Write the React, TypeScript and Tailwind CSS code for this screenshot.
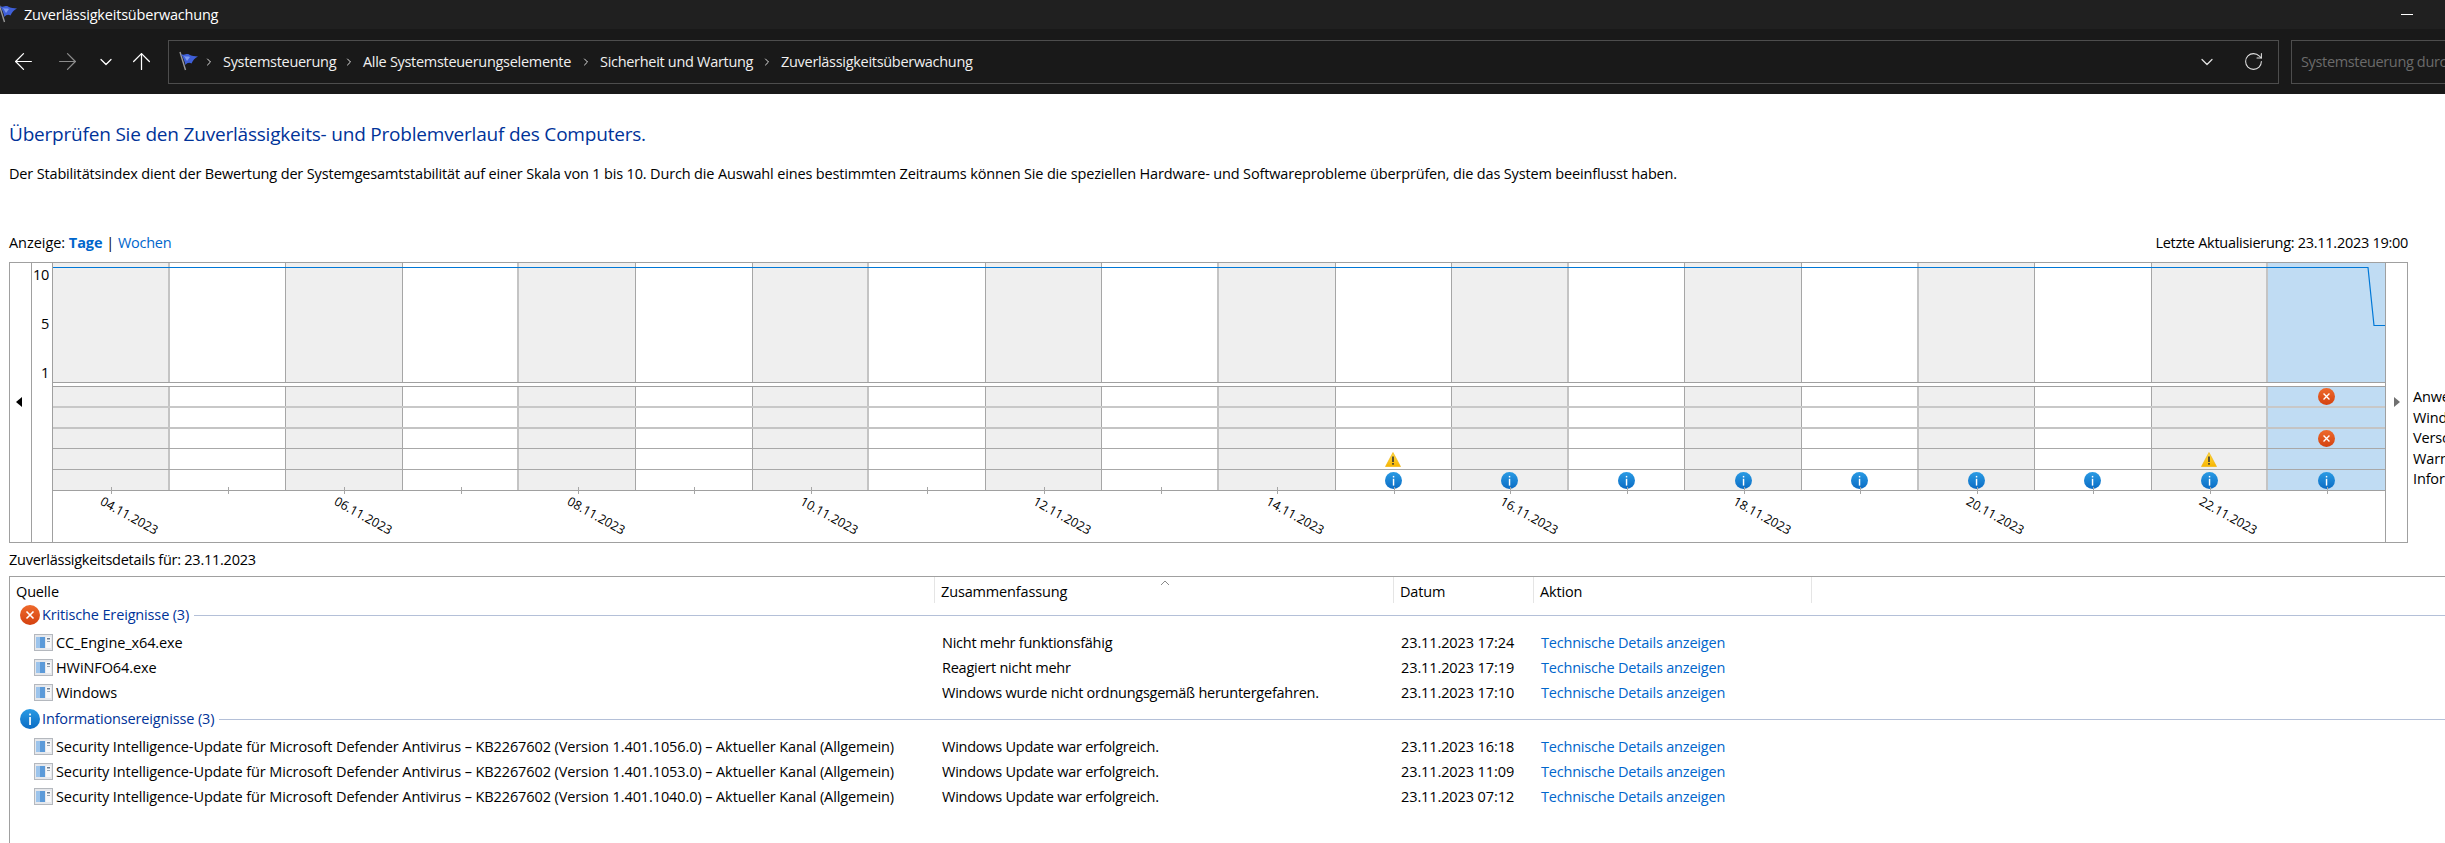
import React from "react";
import { ArrowLeft, ArrowRight, ArrowUp, ChevronDown, ChevronRight, RotateCw } from "lucide-react";

const Flag = () => (
  <svg width="22" height="22" viewBox="0 0 22 22" className="shrink-0">
    <path d="M2 1 L7.5 19" stroke="#9a9a9a" strokeWidth="1.4" />
    <path d="M3 3 C6 5 9 2 11 3.5 C13.5 5 17 5 20 5.5 C17 7 15 9 13.5 12.5 C11 11 9 12 7.5 14 C6.5 10 5 6 3 3 Z" fill="#3f5fd8" />
    <path d="M6 5 C8 6 10 5 12 6 L9 10 Z" fill="#7f9cf0" />
  </svg>
);

const ErrorIcon = ({ size = 17 }: { size?: number }) => (
  <svg width={size} height={size} viewBox="0 0 20 20" className="shrink-0">
    <defs>
      <linearGradient id="err" x1="0" y1="0" x2="0" y2="1">
        <stop offset="0" stopColor="#ee6a2c" />
        <stop offset="1" stopColor="#d4410f" />
      </linearGradient>
    </defs>
    <circle cx="10" cy="10" r="10" fill="url(#err)" />
    <path d="M6.5 6.5 L13.5 13.5 M13.5 6.5 L6.5 13.5" stroke="#fff" strokeWidth="1.6" />
  </svg>
);

const InfoIcon = ({ size = 17 }: { size?: number }) => (
  <svg width={size} height={size} viewBox="0 0 20 20" className="shrink-0">
    <defs>
      <linearGradient id="inf" x1="0" y1="0" x2="0" y2="1">
        <stop offset="0" stopColor="#2a9be4" />
        <stop offset="1" stopColor="#0b6cc4" />
      </linearGradient>
    </defs>
    <circle cx="10" cy="10" r="10" fill="url(#inf)" />
    <rect x="9.2" y="8" width="1.7" height="8" fill="#fff" />
    <rect x="9.2" y="4.6" width="1.7" height="1.8" fill="#fff" />
  </svg>
);

const WarnIcon = () => (
  <svg width="16" height="15" viewBox="0 0 16 15" className="shrink-0">
    <defs>
      <linearGradient id="wrn" x1="0" y1="0" x2="0" y2="1">
        <stop offset="0" stopColor="#ffdc4a" />
        <stop offset="1" stopColor="#f7b500" />
      </linearGradient>
    </defs>
    <path d="M8 0.5 L15.5 14.5 L0.5 14.5 Z" fill="url(#wrn)" stroke="#f0b000" strokeWidth="0.6" strokeLinejoin="round" />
    <rect x="7.2" y="4.5" width="1.6" height="5.5" fill="#333" />
    <rect x="7.2" y="11" width="1.6" height="1.7" fill="#333" />
  </svg>
);

const AppIcon = () => (
  <svg width="19" height="17" viewBox="0 0 19 17" className="shrink-0">
    <rect x="0.5" y="0.5" width="18" height="16" fill="#e6e8ec" stroke="#b4b8be" />
    <rect x="2" y="3" width="9" height="11" fill="#5b9ad9" />
    <rect x="2" y="3" width="4" height="11" fill="#9cc4ec" />
    <rect x="12" y="3" width="5" height="11" fill="#f7f8fa" />
    <rect x="13" y="4" width="3" height="1.5" fill="#6d7b8c" />
    <rect x="13" y="7" width="3" height="1" fill="#9aa5b1" />
  </svg>
);

const dates = ["04.11.2023", "", "06.11.2023", "", "08.11.2023", "", "10.11.2023", "", "12.11.2023", "", "14.11.2023", "", "16.11.2023", "", "18.11.2023", "", "20.11.2023", "", "22.11.2023", ""];

const days = Array.from({ length: 20 }, (_, i) => i);

const cellBg = (i: number) => (i === 19 ? "bg-[#c0dcf3]" : i % 2 === 0 ? "bg-[#efefef]" : "bg-white");
const cellLine = (i: number) =>
  i === 19 ? "" : i % 3 === 0 ? "border-r-2 border-[#c4c4c4]" : "border-r border-[#a6a6a6]";

const trackRows = [
  { h: "h-[21px]", line: "border-b-2 border-[#c8c8c8]", err: [19], warn: [] as number[], info: [] as number[] },
  { h: "h-[21px]", line: "border-b-2 border-[#c4c4c4]", err: [], warn: [], info: [] },
  { h: "h-[20px]", line: "border-b border-[#a8a8a8]", err: [19], warn: [], info: [] },
  { h: "h-[21px]", line: "border-b border-[#a8a8a8]", err: [], warn: [11, 18], info: [] },
  { h: "h-[21px]", line: "border-b border-[#a0a0a0]", err: [], warn: [], info: [11, 12, 13, 14, 15, 16, 17, 18, 19] },
];

const labels = ["Anwendungsfehler", "Windows-Fehler", "Verschiedene Fehler", "Warnungen", "Informationen"];

const critical = [
  { src: "CC_Engine_x64.exe", sum: "Nicht mehr funktionsfähig", date: "23.11.2023 17:24" },
  { src: "HWiNFO64.exe", sum: "Reagiert nicht mehr", date: "23.11.2023 17:19" },
  { src: "Windows", sum: "Windows wurde nicht ordnungsgemäß heruntergefahren.", date: "23.11.2023 17:10" },
];
const infos = [
  { src: "Security Intelligence-Update für Microsoft Defender Antivirus – KB2267602 (Version 1.401.1056.0) – Aktueller Kanal (Allgemein)", sum: "Windows Update war erfolgreich.", date: "23.11.2023 16:18" },
  { src: "Security Intelligence-Update für Microsoft Defender Antivirus – KB2267602 (Version 1.401.1053.0) – Aktueller Kanal (Allgemein)", sum: "Windows Update war erfolgreich.", date: "23.11.2023 11:09" },
  { src: "Security Intelligence-Update für Microsoft Defender Antivirus – KB2267602 (Version 1.401.1040.0) – Aktueller Kanal (Allgemein)", sum: "Windows Update war erfolgreich.", date: "23.11.2023 07:12" },
];

const Crumb = ({ text, w }: { text: string; w: string }) => (
  <div className="flex items-center">
    <ChevronRight size={12} strokeWidth={2} className="text-[#e0e0e0] shrink-0" />
    <span className={`${w} ml-[8px] mr-[7px] whitespace-nowrap text-[14.5px] tracking-[-0.3px] text-[#f0f0f0]`}>{text}</span>
  </div>
);

const GroupHead = ({ icon, text }: { icon: React.ReactNode; text: string }) => (
  <div className="flex items-center h-[24px] pl-[10px]">
    {icon}
    <span className="ml-[2px] text-[14.5px] tracking-[-0.15px] text-[#003399] whitespace-nowrap">{text}</span>
    <div className="flex-1 h-px bg-[#b4c0d8] ml-[5px]" />
  </div>
);

const EventRow = ({ src, sum, date }: { src: string; sum: string; date: string }) => (
  <div className="grid grid-cols-[925px_459px_140px_278px] h-[25px] items-center text-[14.5px] tracking-[-0.1px] text-black">
    <div className="flex items-center pl-[24px] whitespace-nowrap">
      <AppIcon />
      <span className="ml-[3px]">{src}</span>
    </div>
    <div className="pl-[7px] whitespace-nowrap tracking-[-0.25px]">{sum}</div>
    <div className="pl-[7px] whitespace-nowrap">{date}</div>
    <div className="pl-[7px] whitespace-nowrap tracking-[-0.2px] text-[#0066cc]">Technische Details anzeigen</div>
  </div>
);

export default function App() {
  return (
    <div className="w-screen h-screen overflow-hidden flex flex-col bg-white font-['Open_Sans',sans-serif]">
      {/* Titelleiste */}
      <div className="h-[29px] shrink-0 bg-[#202020] flex items-center text-white">
        <div className="-ml-[3px] -mt-[1px]">
          <Flag />
        </div>
        <span className="ml-[5px] text-[14.5px] tracking-[-0.2px]">Zuverlässigkeitsüberwachung</span>
        <div className="ml-auto mr-[32px] w-[12px] h-px bg-white" />
      </div>

      {/* Navigationsleiste */}
      <div className="h-[65px] shrink-0 bg-[#191919] flex items-center">
        <div className="w-[168px] shrink-0 flex items-center">
          <ArrowLeft size={27} strokeWidth={1.1} className="ml-[10px] text-white" />
          <ArrowRight size={27} strokeWidth={1.1} className="ml-[17px] text-[#8c8c8c]" />
          <ChevronDown size={20} strokeWidth={1.5} className="ml-[15px] text-white" />
          <ArrowUp size={27} strokeWidth={1.1} className="ml-[12px] text-white" />
        </div>
        <div className="w-[2111px] shrink-0 h-[44px] border border-[#4d4d4d] flex items-center">
          <div className="ml-[9px] mr-[3px]">
            <Flag />
          </div>
          <Crumb text="Systemsteuerung" w="w-[113px]" />
          <Crumb text="Alle Systemsteuerungselemente" w="w-[210px]" />
          <Crumb text="Sicherheit und Wartung" w="w-[154px]" />
          <Crumb text="Zuverlässigkeitsüberwachung" w="w-[193px]" />
          <ChevronDown size={20} strokeWidth={1.5} className="ml-auto mr-[26px] text-[#e0e0e0]" />
          <RotateCw size={21} strokeWidth={1.2} className="mr-[14px] text-[#e0e0e0]" />
        </div>
        <div className="ml-[12px] w-[300px] shrink-0 h-[44px] border border-[#4d4d4d] flex items-center pl-[9px]">
          <span className="text-[14.5px] tracking-[-0.35px] text-[#6b6b6b] whitespace-nowrap">Systemsteuerung durchsuchen</span>
        </div>
      </div>

      {/* Inhalt */}
      <div className="flex-1 min-h-0 flex flex-col">
        <h1 className="mt-[27px] ml-[9px] h-[26px] leading-[26px] text-[19px] font-normal tracking-[-0.2px] text-[#003399] whitespace-nowrap">
          Überprüfen Sie den Zuverlässigkeits- und Problemverlauf des Computers.
        </h1>
        <p className="mt-[16px] ml-[9px] h-[22px] leading-[22px] text-[14.5px] tracking-[-0.16px] text-black whitespace-nowrap">
          Der Stabilitätsindex dient der Bewertung der Systemgesamtstabilität auf einer Skala von 1 bis 10. Durch die Auswahl eines bestimmten Zeitraums können Sie die speziellen Hardware- und Softwareprobleme überprüfen, die das System beeinflusst haben.
        </p>

        <div className="mt-[47px] ml-[9px] w-[2399px] h-[22px] flex items-center justify-between text-[14.5px] tracking-[-0.15px] text-black">
          <div className="tracking-[-0.05px]">
            Anzeige: <span className="font-bold text-[#0066cc]">Tage</span> | <span className="tracking-[-0.25px] text-[#0066cc]">Wochen</span>
          </div>
          <div className="tracking-[-0.28px]">Letzte Aktualisierung: 23.11.2023 19:00</div>
        </div>

        {/* Stabilitätsdiagramm */}
        <div className="mt-[8px] flex shrink-0">
          <div className="ml-[9px] w-[2399px] shrink-0 h-[281px] border border-[#a0a0a0] flex">
            <div className="w-[22px] shrink-0 border-r border-[#a0a0a0] pt-[134px] pl-[6px]">
              <div className="w-0 h-0 border-y-[5px] border-y-transparent border-r-[6px] border-r-black" />
            </div>
            <div className="w-[21px] shrink-0 border-r border-[#a0a0a0] text-right pr-[3px] text-[14.5px] leading-[20px] tracking-[-0.3px] text-black">
              <div className="mt-[2px] h-[49px]">10</div>
              <div className="h-[49px]">5</div>
              <div>1</div>
            </div>

            <div className="flex-1 min-w-0 flex flex-col relative">
              <div className="grid grid-cols-[repeat(20,1fr)] h-[120px] border-b border-[#a0a0a0]">
                {days.map((i) => (
                  <div key={i} className={`${cellBg(i)} ${cellLine(i)}`} />
                ))}
              </div>
              <svg className="absolute left-0 top-0" width="2332" height="70">
                <path d="M0 4.5 H2315 L2321 62.5 H2332" fill="none" stroke="#0078d7" strokeWidth="1.2" />
              </svg>
              <div className="h-[4px] border-b border-[#a0a0a0]" />
              {trackRows.map((row, r) => (
                <div key={r} className={`grid grid-cols-[repeat(20,1fr)] ${row.h} ${row.line}`}>
                  {days.map((i) => (
                    <div key={i} className={`flex items-center justify-center ${cellBg(i)} ${cellLine(i)}`}>
                      {row.err.includes(i) && <ErrorIcon />}
                      {row.warn.includes(i) && <WarnIcon />}
                      {row.info.includes(i) && <InfoIcon />}
                    </div>
                  ))}
                </div>
              ))}
              <div className="grid grid-cols-[repeat(20,1fr)] flex-1">
                {days.map((i) => (
                  <div key={i} className="relative flex items-center justify-center">
                    <div className="absolute -top-[4px] left-1/2 w-px h-[7px] bg-[#a6a6a6]" />
                    {dates[i] && (
                      <span className="translate-x-[18px] rotate-[29deg] text-[12.5px] text-black whitespace-nowrap">
                        {dates[i]}
                      </span>
                    )}
                  </div>
                ))}
              </div>
            </div>

            <div className="w-[22px] shrink-0 border-l border-[#a0a0a0] pt-[134px] pl-[8px]">
              <div className="w-0 h-0 border-y-[5px] border-y-transparent border-l-[6px] border-l-[#707070]" />
            </div>
          </div>
          <div className="ml-[5px] mt-[125px] text-[14.5px] leading-[20.5px] tracking-[-0.15px] text-black whitespace-nowrap">
            {labels.map((l) => (
              <div key={l}>{l}</div>
            ))}
          </div>
        </div>

        <div className="mt-[7px] ml-[9px] h-[20px] leading-[20px] text-[14.5px] tracking-[-0.25px] text-black">
          Zuverlässigkeitsdetails für: 23.11.2023
        </div>

        {/* Ereignistabelle */}
        <div className="mt-[6px] ml-[9px] flex-1 border-l border-t border-[#a0a0a0]">
          <div className="grid grid-cols-[925px_459px_140px_278px] h-[26px] text-[14.5px] tracking-[-0.15px] text-black relative">
            <div className="pl-[6px] pt-[4px] border-r border-[#e5e5e5]">Quelle</div>
            <div className="pl-[6px] pt-[4px] border-r border-[#e5e5e5]">Zusammenfassung</div>
            <div className="pl-[6px] pt-[4px] border-r border-[#e5e5e5]">Datum</div>
            <div className="pl-[6px] pt-[4px] border-r border-[#e5e5e5]">Aktion</div>
            <svg className="absolute left-[1150px] top-[3px]" width="10" height="6" viewBox="0 0 10 6">
              <path d="M1 5 L5 1 L9 5" fill="none" stroke="#8a8a8a" />
            </svg>
          </div>
          <GroupHead icon={<ErrorIcon size={20} />} text="Kritische Ereignisse (3)" />
          <div className="mt-[3px]">
            {critical.map((e) => (
              <EventRow key={e.src} {...e} />
            ))}
          </div>
          <div className="mt-[2px]">
            <GroupHead icon={<InfoIcon size={20} />} text="Informationsereignisse (3)" />
          </div>
          <div className="mt-[3px]">
            {infos.map((e) => (
              <EventRow key={e.date} {...e} />
            ))}
          </div>
        </div>
      </div>
    </div>
  );
}
